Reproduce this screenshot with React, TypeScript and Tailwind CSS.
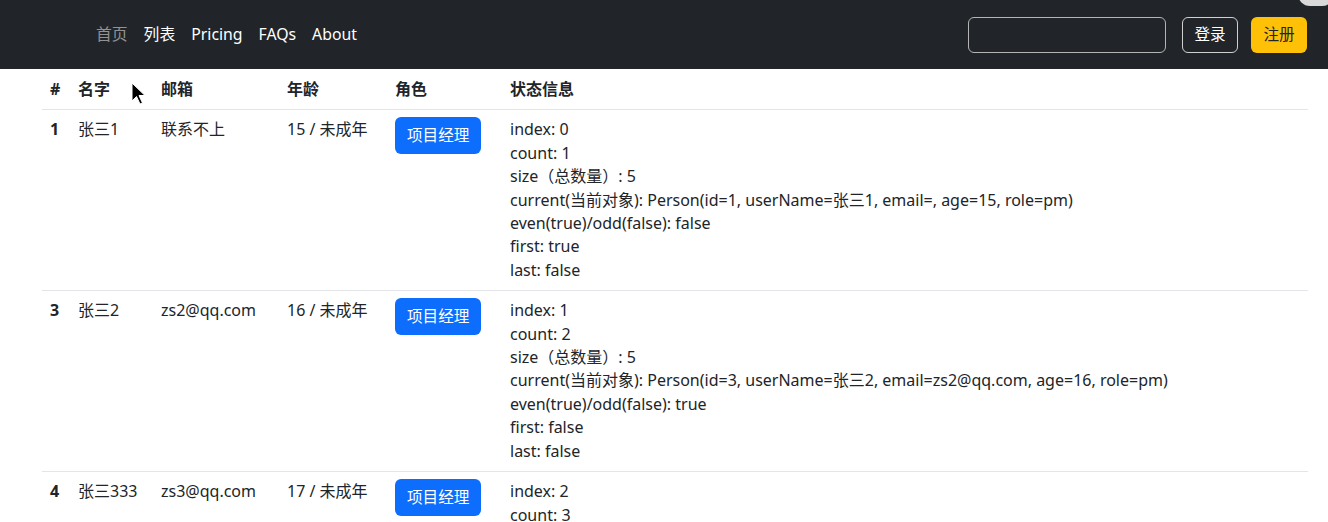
import React from 'react';

interface Person {
  no: number;
  name: string;
  email: string;
  age: number;
  role: string;
  index: number;
  current: string;
  even: boolean;
  first: boolean;
  last: boolean;
}

const people: Person[] = [
  { no: 1, name: '张三1', email: '联系不上', age: 15, role: '项目经理', index: 0, current: 'Person(id=1, userName=张三1, email=, age=15, role=pm)', even: false, first: true, last: false },
  { no: 3, name: '张三2', email: 'zs2@qq.com', age: 16, role: '项目经理', index: 1, current: 'Person(id=3, userName=张三2, email=zs2@qq.com, age=16, role=pm)', even: true, first: false, last: false },
  { no: 4, name: '张三333', email: 'zs3@qq.com', age: 17, role: '项目经理', index: 2, current: 'Person(id=4, userName=张三333, email=zs3@qq.com, age=17, role=pm)', even: false, first: false, last: false },
];

const Navbar = () => (
  <nav className="h-[69px] bg-[#212529] flex items-center pl-[88px] pr-[21px]">
    <ul className="flex items-center text-[15.8px]">
      <li className="px-2 text-white/50">首页</li>
      <li className="px-2 text-white">列表</li>
      <li className="px-2 text-white">Pricing</li>
      <li className="px-2 text-white">FAQs</li>
      <li className="px-2 text-white">About</li>
    </ul>
    <div className="ml-auto flex items-center">
      <div className="w-[198px] h-[36px] rounded-md border border-[#b5b5b5] mr-[16px]"></div>
      <button className="h-[36px] w-[56px] rounded-md border border-[#d0d0d0] text-white text-[15.6px] mr-[13px]">登录</button>
      <button className="h-[36px] w-[56px] rounded-md bg-[#ffc107] text-[#212529] text-[15.6px]">注册</button>
    </div>
  </nav>
);

const Row = ({ p }: { p: Person }) => (
  <tr className="border-b border-[#e3e5e8] align-top">
    <td className="px-2 py-[8px] font-bold">{p.no}</td>
    <td className="px-2 py-[8px]">{p.name}</td>
    <td className="px-2 py-[8px]">{p.email}</td>
    <td className="px-2 py-[8px]">{p.age} / 未成年</td>
    <td className="px-2 py-[7px]">
      <span className="inline-block bg-[#0d6efd] text-white text-[15.6px] rounded-md px-[12px] py-[6px] leading-[25px]">{p.role}</span>
    </td>
    <td className="px-2 py-[8px]">
      <div>index: {p.index}</div>
      <div>count: {p.index + 1}</div>
      <div>size（总数量）: 5</div>
      <div>current(当前对象): {p.current}</div>
      <div>even(true)/odd(false): {String(p.even)}</div>
      <div>first: {String(p.first)}</div>
      <div>last: {String(p.last)}</div>
    </td>
  </tr>
);

export default function App() {
  return (
    <div
      className="relative w-[1328px] h-[522px] overflow-hidden bg-white text-[#212529]"
      style={{ fontFamily: '"Segoe UI", "Noto Sans", "Noto Sans CJK SC", sans-serif' }}
    >
      <Navbar />
      <div className="pl-[42px] pr-[20px]">
        <table className="w-full table-fixed border-collapse text-[16px] leading-[23.4px]">
          <colgroup>
            <col className="w-[28px]" />
            <col className="w-[83px]" />
            <col className="w-[126px]" />
            <col className="w-[108px]" />
            <col className="w-[115px]" />
            <col />
          </colgroup>
          <thead>
            <tr className="border-b border-[#e3e5e8] text-left">
              <th className="px-2 pt-[9px] pb-[8px] font-bold">#</th>
              <th className="px-2 pt-[9px] pb-[8px] font-bold">名字</th>
              <th className="px-2 pt-[9px] pb-[8px] font-bold">邮箱</th>
              <th className="px-2 pt-[9px] pb-[8px] font-bold">年龄</th>
              <th className="px-2 pt-[9px] pb-[8px] font-bold">角色</th>
              <th className="px-2 pt-[9px] pb-[8px] font-bold">状态信息</th>
            </tr>
          </thead>
          <tbody>
            {people.map((p) => (
              <Row key={p.no} p={p} />
            ))}
          </tbody>
        </table>
      </div>

      {/* mouse pointer */}
      <svg className="absolute left-[131px] top-[82px]" width="16" height="24" viewBox="0 0 16 24">
        <path d="M1 1 L1 19 L5.5 14.5 L9 22 L11.5 21 L8 13.5 L14 13.5 Z" fill="#000" stroke="#fff" strokeWidth="1" />
      </svg>

      {/* overlay shape at top right */}
      <div className="absolute right-[-6px] top-[-18px] w-[36px] h-[24px] rounded-full bg-[#d9d9d9]"></div>
    </div>
  );
}
